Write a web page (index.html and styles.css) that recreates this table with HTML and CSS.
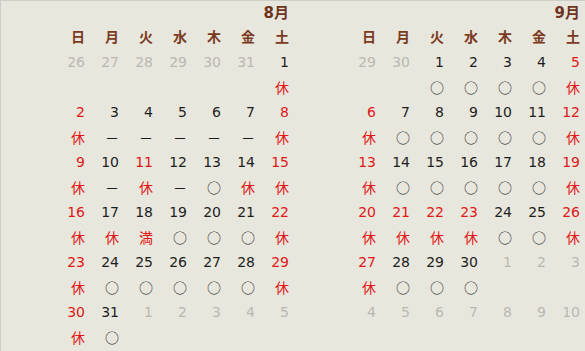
FILE: index.html
```html
<!DOCTYPE html>
<html lang="ja">
<head>
<meta charset="utf-8">
<link rel="stylesheet" href="styles.css">
</head>
<body>
<div class="page">
  <div class="half">
    <table class="cal">
      <tr class="title"><th colspan="7">8月</th></tr>
      <tr class="wd"><th>日</th><th>月</th><th>火</th><th>水</th><th>木</th><th>金</th><th>土</th></tr>
      <tr><td class="o">26</td><td class="o">27</td><td class="o">28</td><td class="o">29</td><td class="o">30</td><td class="o">31</td><td>1</td></tr>
      <tr class="st"><td></td><td></td><td></td><td></td><td></td><td></td><td class="r">休</td></tr>
      <tr><td class="r">2</td><td>3</td><td>4</td><td>5</td><td>6</td><td>7</td><td class="r">8</td></tr>
      <tr class="st"><td class="r">休</td><td>－</td><td>－</td><td>－</td><td>－</td><td>－</td><td class="r">休</td></tr>
      <tr><td class="r">9</td><td>10</td><td class="r">11</td><td>12</td><td>13</td><td>14</td><td class="r">15</td></tr>
      <tr class="st"><td class="r">休</td><td>－</td><td class="r">休</td><td>－</td><td>○</td><td class="r">休</td><td class="r">休</td></tr>
      <tr><td class="r">16</td><td>17</td><td>18</td><td>19</td><td>20</td><td>21</td><td class="r">22</td></tr>
      <tr class="st"><td class="r">休</td><td class="r">休</td><td class="r">満</td><td>○</td><td>○</td><td>○</td><td class="r">休</td></tr>
      <tr><td class="r">23</td><td>24</td><td>25</td><td>26</td><td>27</td><td>28</td><td class="r">29</td></tr>
      <tr class="st"><td class="r">休</td><td>○</td><td>○</td><td>○</td><td>○</td><td>○</td><td class="r">休</td></tr>
      <tr><td class="r">30</td><td>31</td><td class="o">1</td><td class="o">2</td><td class="o">3</td><td class="o">4</td><td class="o">5</td></tr>
      <tr class="st"><td class="r">休</td><td>○</td><td></td><td></td><td></td><td></td><td></td></tr>
    </table>
  </div>
  <div class="half">
    <table class="cal">
      <tr class="title"><th colspan="7">9月</th></tr>
      <tr class="wd"><th>日</th><th>月</th><th>火</th><th>水</th><th>木</th><th>金</th><th>土</th></tr>
      <tr><td class="o">29</td><td class="o">30</td><td>1</td><td>2</td><td>3</td><td>4</td><td class="r">5</td></tr>
      <tr class="st"><td></td><td></td><td>○</td><td>○</td><td>○</td><td>○</td><td class="r">休</td></tr>
      <tr><td class="r">6</td><td>7</td><td>8</td><td>9</td><td>10</td><td>11</td><td class="r">12</td></tr>
      <tr class="st"><td class="r">休</td><td>○</td><td>○</td><td>○</td><td>○</td><td>○</td><td class="r">休</td></tr>
      <tr><td class="r">13</td><td>14</td><td>15</td><td>16</td><td>17</td><td>18</td><td class="r">19</td></tr>
      <tr class="st"><td class="r">休</td><td>○</td><td>○</td><td>○</td><td>○</td><td>○</td><td class="r">休</td></tr>
      <tr><td class="r">20</td><td class="r">21</td><td class="r">22</td><td class="r">23</td><td>24</td><td>25</td><td class="r">26</td></tr>
      <tr class="st"><td class="r">休</td><td class="r">休</td><td class="r">休</td><td class="r">休</td><td>○</td><td>○</td><td class="r">休</td></tr>
      <tr><td class="r">27</td><td>28</td><td>29</td><td>30</td><td class="o">1</td><td class="o">2</td><td class="o">3</td></tr>
      <tr class="st"><td class="r">休</td><td>○</td><td>○</td><td>○</td><td></td><td></td><td></td></tr>
      <tr><td class="o">4</td><td class="o">5</td><td class="o">6</td><td class="o">7</td><td class="o">8</td><td class="o">9</td><td class="o">10</td></tr>
      <tr class="st"><td></td><td></td><td></td><td></td><td></td><td></td><td></td></tr>
    </table>
  </div>
</div>
</body>
</html>
```

FILE: styles.css
```css
html, body {
  margin: 0;
  padding: 0;
  background: #e8e7dd;
}
body {
  width: 585px;
  height: 351px;
  overflow: hidden;
  box-sizing: border-box;
  border-top: 1px solid #cfcec6;
  border-left: 1px solid #cfcec6;
  font-family: "DejaVu Sans", "Noto Sans CJK JP", sans-serif;
  font-size: 14px;
  color: #1e1e1e;
}
.page {
  display: flex;
}
.half {
  width: 291px;
  flex: none;
  display: flex;
  justify-content: flex-end;
  padding-right: 2px;
  box-sizing: border-box;
}
.half:first-child {
  width: 290px;
}
.cal {
  border-collapse: collapse;
  border-spacing: 0;
  table-layout: fixed;
}
.cal td, .cal th {
  width: 34px;
  height: 25px;
  padding: 0;
  text-align: right;
  vertical-align: middle;
  line-height: 25px;
  white-space: nowrap;
}
.cal .title th {
  width: auto;
  height: 24px;
  line-height: 24px;
  font-size: 15px;
  font-weight: bold;
  color: #6e3320;
}
.cal .wd th {
  height: 25px;
  line-height: 22px;
  vertical-align: top;
  font-weight: bold;
  color: #7a3a22;
  font-family: "Noto Sans CJK JP", sans-serif;
}
.cal .st td {
  font-family: "Noto Sans CJK JP", sans-serif;
}
.cal .r {
  color: #e01818;
}
.cal .o {
  color: #b9b8b1;
}
```
